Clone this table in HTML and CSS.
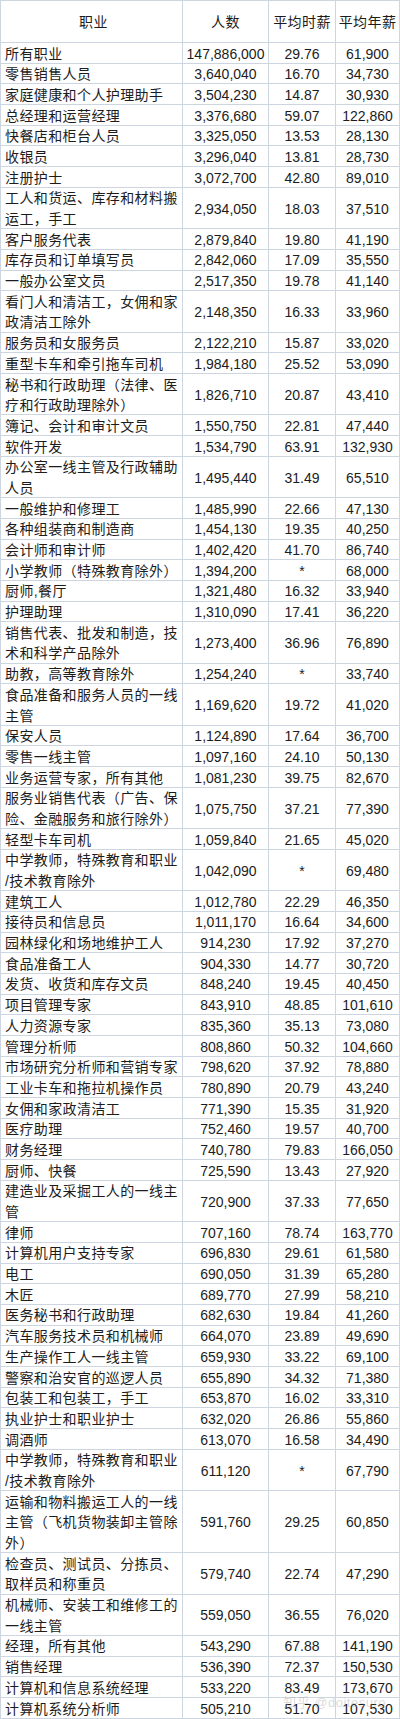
FILE: index.html
```html
<!DOCTYPE html>
<html lang="zh-CN">
<head>
<meta charset="utf-8">
<title>职业薪资表</title>
<link rel="stylesheet" href="styles.css">
</head>
<body>
<div class="sheet">
  <div class="row head">
    <div class="c name hc">职业</div>
    <div class="c num">人数</div>
    <div class="c num">平均时薪</div>
    <div class="c num">平均年薪</div>
  </div>
  <div class="row r1"><div class="c name">所有职业</div><div class="c num">147,886,000</div><div class="c num">29.76</div><div class="c num">61,900</div></div>
  <div class="row r1"><div class="c name">零售销售人员</div><div class="c num">3,640,040</div><div class="c num">16.70</div><div class="c num">34,730</div></div>
  <div class="row r1"><div class="c name">家庭健康和个人护理助手</div><div class="c num">3,504,230</div><div class="c num">14.87</div><div class="c num">30,930</div></div>
  <div class="row r1"><div class="c name">总经理和运营经理</div><div class="c num">3,376,680</div><div class="c num">59.07</div><div class="c num">122,860</div></div>
  <div class="row r1"><div class="c name">快餐店和柜台人员</div><div class="c num">3,325,050</div><div class="c num">13.53</div><div class="c num">28,130</div></div>
  <div class="row r1"><div class="c name">收银员</div><div class="c num">3,296,040</div><div class="c num">13.81</div><div class="c num">28,730</div></div>
  <div class="row r1"><div class="c name">注册护士</div><div class="c num">3,072,700</div><div class="c num">42.80</div><div class="c num">89,010</div></div>
  <div class="row r2"><div class="c name">工人和货运、库存和材料搬<br>运工，手工</div><div class="c num">2,934,050</div><div class="c num">18.03</div><div class="c num">37,510</div></div>
  <div class="row r1"><div class="c name">客户服务代表</div><div class="c num">2,879,840</div><div class="c num">19.80</div><div class="c num">41,190</div></div>
  <div class="row r1"><div class="c name">库存员和订单填写员</div><div class="c num">2,842,060</div><div class="c num">17.09</div><div class="c num">35,550</div></div>
  <div class="row r1"><div class="c name">一般办公室文员</div><div class="c num">2,517,350</div><div class="c num">19.78</div><div class="c num">41,140</div></div>
  <div class="row r2"><div class="c name">看门人和清洁工，女佣和家<br>政清洁工除外</div><div class="c num">2,148,350</div><div class="c num">16.33</div><div class="c num">33,960</div></div>
  <div class="row r1"><div class="c name">服务员和女服务员</div><div class="c num">2,122,210</div><div class="c num">15.87</div><div class="c num">33,020</div></div>
  <div class="row r1"><div class="c name">重型卡车和牵引拖车司机</div><div class="c num">1,984,180</div><div class="c num">25.52</div><div class="c num">53,090</div></div>
  <div class="row r2"><div class="c name">秘书和行政助理（法律、医<br>疗和行政助理除外）</div><div class="c num">1,826,710</div><div class="c num">20.87</div><div class="c num">43,410</div></div>
  <div class="row r1"><div class="c name">簿记、会计和审计文员</div><div class="c num">1,550,750</div><div class="c num">22.81</div><div class="c num">47,440</div></div>
  <div class="row r1"><div class="c name">软件开发</div><div class="c num">1,534,790</div><div class="c num">63.91</div><div class="c num">132,930</div></div>
  <div class="row r2"><div class="c name">办公室一线主管及行政辅助<br>人员</div><div class="c num">1,495,440</div><div class="c num">31.49</div><div class="c num">65,510</div></div>
  <div class="row r1"><div class="c name">一般维护和修理工</div><div class="c num">1,485,990</div><div class="c num">22.66</div><div class="c num">47,130</div></div>
  <div class="row r1"><div class="c name">各种组装商和制造商</div><div class="c num">1,454,130</div><div class="c num">19.35</div><div class="c num">40,250</div></div>
  <div class="row r1"><div class="c name">会计师和审计师</div><div class="c num">1,402,420</div><div class="c num">41.70</div><div class="c num">86,740</div></div>
  <div class="row r1"><div class="c name">小学教师（特殊教育除外）</div><div class="c num">1,394,200</div><div class="c num">*</div><div class="c num">68,000</div></div>
  <div class="row r1"><div class="c name">厨师,餐厅</div><div class="c num">1,321,480</div><div class="c num">16.32</div><div class="c num">33,940</div></div>
  <div class="row r1"><div class="c name">护理助理</div><div class="c num">1,310,090</div><div class="c num">17.41</div><div class="c num">36,220</div></div>
  <div class="row r2"><div class="c name">销售代表、批发和制造，技<br>术和科学产品除外</div><div class="c num">1,273,400</div><div class="c num">36.96</div><div class="c num">76,890</div></div>
  <div class="row r1"><div class="c name">助教，高等教育除外</div><div class="c num">1,254,240</div><div class="c num">*</div><div class="c num">33,740</div></div>
  <div class="row r2"><div class="c name">食品准备和服务人员的一线<br>主管</div><div class="c num">1,169,620</div><div class="c num">19.72</div><div class="c num">41,020</div></div>
  <div class="row r1"><div class="c name">保安人员</div><div class="c num">1,124,890</div><div class="c num">17.64</div><div class="c num">36,700</div></div>
  <div class="row r1"><div class="c name">零售一线主管</div><div class="c num">1,097,160</div><div class="c num">24.10</div><div class="c num">50,130</div></div>
  <div class="row r1"><div class="c name">业务运营专家，所有其他</div><div class="c num">1,081,230</div><div class="c num">39.75</div><div class="c num">82,670</div></div>
  <div class="row r2"><div class="c name">服务业销售代表（广告、保<br>险、金融服务和旅行除外）</div><div class="c num">1,075,750</div><div class="c num">37.21</div><div class="c num">77,390</div></div>
  <div class="row r1"><div class="c name">轻型卡车司机</div><div class="c num">1,059,840</div><div class="c num">21.65</div><div class="c num">45,020</div></div>
  <div class="row r2"><div class="c name">中学教师，特殊教育和职业<br>/技术教育除外</div><div class="c num">1,042,090</div><div class="c num">*</div><div class="c num">69,480</div></div>
  <div class="row r1"><div class="c name">建筑工人</div><div class="c num">1,012,780</div><div class="c num">22.29</div><div class="c num">46,350</div></div>
  <div class="row r1"><div class="c name">接待员和信息员</div><div class="c num">1,011,170</div><div class="c num">16.64</div><div class="c num">34,600</div></div>
  <div class="row r1"><div class="c name">园林绿化和场地维护工人</div><div class="c num">914,230</div><div class="c num">17.92</div><div class="c num">37,270</div></div>
  <div class="row r1"><div class="c name">食品准备工人</div><div class="c num">904,330</div><div class="c num">14.77</div><div class="c num">30,720</div></div>
  <div class="row r1"><div class="c name">发货、收货和库存文员</div><div class="c num">848,240</div><div class="c num">19.45</div><div class="c num">40,450</div></div>
  <div class="row r1"><div class="c name">项目管理专家</div><div class="c num">843,910</div><div class="c num">48.85</div><div class="c num">101,610</div></div>
  <div class="row r1"><div class="c name">人力资源专家</div><div class="c num">835,360</div><div class="c num">35.13</div><div class="c num">73,080</div></div>
  <div class="row r1"><div class="c name">管理分析师</div><div class="c num">808,860</div><div class="c num">50.32</div><div class="c num">104,660</div></div>
  <div class="row r1"><div class="c name">市场研究分析师和营销专家</div><div class="c num">798,620</div><div class="c num">37.92</div><div class="c num">78,880</div></div>
  <div class="row r1"><div class="c name">工业卡车和拖拉机操作员</div><div class="c num">780,890</div><div class="c num">20.79</div><div class="c num">43,240</div></div>
  <div class="row r1"><div class="c name">女佣和家政清洁工</div><div class="c num">771,390</div><div class="c num">15.35</div><div class="c num">31,920</div></div>
  <div class="row r1"><div class="c name">医疗助理</div><div class="c num">752,460</div><div class="c num">19.57</div><div class="c num">40,700</div></div>
  <div class="row r1"><div class="c name">财务经理</div><div class="c num">740,780</div><div class="c num">79.83</div><div class="c num">166,050</div></div>
  <div class="row r1"><div class="c name">厨师、快餐</div><div class="c num">725,590</div><div class="c num">13.43</div><div class="c num">27,920</div></div>
  <div class="row r2"><div class="c name">建造业及采掘工人的一线主<br>管</div><div class="c num">720,900</div><div class="c num">37.33</div><div class="c num">77,650</div></div>
  <div class="row r1"><div class="c name">律师</div><div class="c num">707,160</div><div class="c num">78.74</div><div class="c num">163,770</div></div>
  <div class="row r1"><div class="c name">计算机用户支持专家</div><div class="c num">696,830</div><div class="c num">29.61</div><div class="c num">61,580</div></div>
  <div class="row r1"><div class="c name">电工</div><div class="c num">690,050</div><div class="c num">31.39</div><div class="c num">65,280</div></div>
  <div class="row r1"><div class="c name">木匠</div><div class="c num">689,770</div><div class="c num">27.99</div><div class="c num">58,210</div></div>
  <div class="row r1"><div class="c name">医务秘书和行政助理</div><div class="c num">682,630</div><div class="c num">19.84</div><div class="c num">41,260</div></div>
  <div class="row r1"><div class="c name">汽车服务技术员和机械师</div><div class="c num">664,070</div><div class="c num">23.89</div><div class="c num">49,690</div></div>
  <div class="row r1"><div class="c name">生产操作工人一线主管</div><div class="c num">659,930</div><div class="c num">33.22</div><div class="c num">69,100</div></div>
  <div class="row r1"><div class="c name">警察和治安官的巡逻人员</div><div class="c num">655,890</div><div class="c num">34.32</div><div class="c num">71,380</div></div>
  <div class="row r1"><div class="c name">包装工和包装工，手工</div><div class="c num">653,870</div><div class="c num">16.02</div><div class="c num">33,310</div></div>
  <div class="row r1"><div class="c name">执业护士和职业护士</div><div class="c num">632,020</div><div class="c num">26.86</div><div class="c num">55,860</div></div>
  <div class="row r1"><div class="c name">调酒师</div><div class="c num">613,070</div><div class="c num">16.58</div><div class="c num">34,490</div></div>
  <div class="row r2"><div class="c name">中学教师，特殊教育和职业<br>/技术教育除外</div><div class="c num">611,120</div><div class="c num">*</div><div class="c num">67,790</div></div>
  <div class="row r3"><div class="c name">运输和物料搬运工人的一线<br>主管（飞机货物装卸主管除<br>外）</div><div class="c num">591,760</div><div class="c num">29.25</div><div class="c num">60,850</div></div>
  <div class="row r2"><div class="c name">检查员、测试员、分拣员、<br>取样员和称重员</div><div class="c num">579,740</div><div class="c num">22.74</div><div class="c num">47,290</div></div>
  <div class="row r2"><div class="c name">机械师、安装工和维修工的<br>一线主管</div><div class="c num">559,050</div><div class="c num">36.55</div><div class="c num">76,020</div></div>
  <div class="row r1"><div class="c name">经理，所有其他</div><div class="c num">543,290</div><div class="c num">67.88</div><div class="c num">141,190</div></div>
  <div class="row r1"><div class="c name">销售经理</div><div class="c num">536,390</div><div class="c num">72.37</div><div class="c num">150,530</div></div>
  <div class="row r1"><div class="c name">计算机和信息系统经理</div><div class="c num">533,220</div><div class="c num">83.49</div><div class="c num">173,670</div></div>
  <div class="row r1"><div class="c name">计算机系统分析师</div><div class="c num">505,210</div><div class="c num">51.70</div><div class="c num">107,530</div></div>
  <div class="watermark">知乎 @doitesuro</div>
</div>
</body>
</html>
```

FILE: styles.css
```css
* { box-sizing: border-box; }
html, body { margin: 0; padding: 0; background: #ffffff; }
body {
  font-family: "Liberation Sans", "Noto Sans CJK SC", sans-serif;
  font-size: 14px;
  color: #1c1c1c;
  --u: 20.691px;
}
.sheet {
  position: relative;
  width: 400px;
}
.row {
  display: grid;
  grid-template-columns: 183px 86px 67px 64px;
  border-bottom: 1px solid #cdd5e1;
}
.head {
  height: 43px;
  border-top: 1px solid #cdd5e1;
}
.r1 { height: var(--u); }
.r2 { height: calc(var(--u) * 2); }
.r3 { height: calc(var(--u) * 3); }
.c {
  display: flex;
  align-items: center;
  border-right: 1px solid #cdd5e1;
  white-space: nowrap;
  line-height: var(--u);
  padding-top: 2px;
  overflow: hidden;
}
.name {
  border-left: 1px solid #cdd5e1;
  padding-left: 4px;
  letter-spacing: 0.4px;
}
.hc { justify-content: center; }
.num { justify-content: center; }
.head .num { letter-spacing: 0.4px; }
.watermark {
  position: absolute;
  right: 14px;
  bottom: 8px;
  font-size: 13px;
  color: rgba(150, 150, 150, 0.35);
  letter-spacing: 0.5px;
  pointer-events: none;
}
```
